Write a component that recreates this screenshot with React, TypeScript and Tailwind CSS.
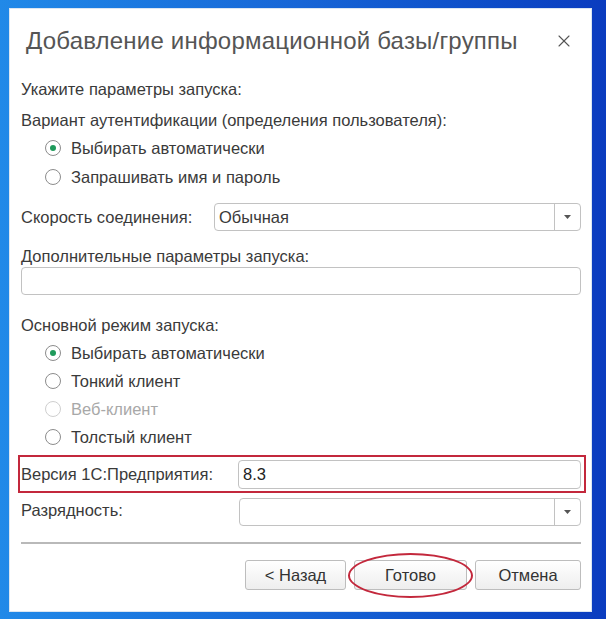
import { X } from 'lucide-react';

function Radio({ label, checked, disabled }: { label: string; checked?: boolean; disabled?: boolean }) {
  return (
    <div className="h-[28px] flex items-center pl-[24px]">
      <span
        className={`w-[16px] h-[16px] rounded-full border bg-white flex items-center justify-center ${
          disabled ? 'border-[#cfcfcf]' : 'border-[#8c8c8c]'
        }`}
      >
        {checked && <span className="w-[6px] h-[6px] rounded-full bg-[#1f9a5b]" />}
      </span>
      <span className={`ml-[10px] ${disabled ? 'text-[#a8a8a8]' : ''}`}>{label}</span>
    </div>
  );
}

function Dropdown({ value, className }: { value?: string; className?: string }) {
  return (
    <div className={`flex h-[28px] border border-[#c2c2c2] rounded-[4px] bg-white ${className ?? ''}`}>
      <div className="flex-1 flex items-center px-[4px]">{value}</div>
      <div className="w-[26px] border-l border-[#c2c2c2] flex items-center justify-center">
        <svg width="7" height="4" viewBox="0 0 7 4">
          <path d="M0 0 L7 0 L3.5 4 Z" fill="#555" />
        </svg>
      </div>
    </div>
  );
}

function Btn({ label, w }: { label: string; w: string }) {
  return (
    <div
      className={`${w} h-[30px] flex items-center justify-center border border-[#bdbdbd] rounded-[3px] bg-gradient-to-b from-white to-[#eeeeee] text-[#333]`}
    >
      {label}
    </div>
  );
}

export default function App() {
  return (
    <div className="w-[606px] h-[619px] bg-gradient-to-r from-[#2189e8] via-[#1765d6] to-[#0b3cbf] pt-[8px] pl-[9px] overflow-hidden">
      <div
        className="w-[583px] h-[604px] bg-white border border-[#dbe6f2] flex flex-col text-[16.5px] leading-[20px] text-[#3a3a3a]"
        style={{ fontFamily: '"Liberation Sans", Arial, sans-serif' }}
      >
        {/* Title */}
        <div className="h-[63px] flex items-center justify-between pl-[16px] pr-[17px]">
          <span className="text-[24px] text-[#555] tracking-[0.2px]">Добавление информационной базы/группы</span>
          <X size={20} strokeWidth={1.3} className="text-[#555]" />
        </div>

        <div className="flex flex-col pl-[11px] pr-[10px]">
          <div className="h-[34px] flex items-center">Укажите параметры запуска:</div>
          <div className="h-[28px] flex items-center">Вариант аутентификации (определения пользователя):</div>
          <Radio label="Выбирать автоматически" checked />
          <div className="h-[30px] flex items-center pl-[24px]">
            <span className="w-[16px] h-[16px] rounded-full border border-[#8c8c8c]" />
            <span className="ml-[10px]">Запрашивать имя и пароль</span>
          </div>

          <div className="h-[50px] flex items-center">
            <span className="w-[193px]">Скорость соединения:</span>
            <Dropdown value="Обычная" className="flex-1" />
          </div>

          <div className="h-[20px] mt-[4px] flex items-center">Дополнительные параметры запуска:</div>
          <div className="h-[28px] mt-[1px] border border-[#c2c2c2] rounded-[4px]" />

          <div className="h-[20px] mt-[20px] flex items-center">Основной режим запуска:</div>
          <div className="mt-[4px]">
            <Radio label="Выбирать автоматически" checked />
            <Radio label="Тонкий клиент" />
            <Radio label="Веб-клиент" disabled />
            <Radio label="Толстый клиент" />
          </div>

          <div className="mt-[4px] -ml-[3px] -mr-[5px] h-[38px] border-2 border-[#c3283c] flex items-center pl-[1px] pr-[3px]">
            <span className="w-[217px]">Версия 1С:Предприятия:</span>
            <div className="flex-1 h-[29px] border border-[#c2c2c2] rounded-[4px] flex items-center px-[4px] text-[#222]">
              8.3
            </div>
          </div>

          <div className="h-[28px] mt-[5px] flex items-center">
            <span className="w-[218px] self-start pt-[2px]">Разрядность:</span>
            <Dropdown className="flex-1" />
          </div>

          <div className="h-[2px] mt-[16px] bg-[#b9b9b9]" />

          <div className="mt-[16px] flex justify-end gap-[8px]">
            <Btn label="< Назад" w="w-[101px]" />
            <div className="relative">
              <Btn label="Готово" w="w-[113px]" />
              <div className="absolute -left-[6px] -right-[6px] -top-[7px] -bottom-[8px] rounded-[50%] border-2 border-[#c3283c]" />
            </div>
            <Btn label="Отмена" w="w-[106px]" />
          </div>
        </div>
      </div>
    </div>
  );
}
